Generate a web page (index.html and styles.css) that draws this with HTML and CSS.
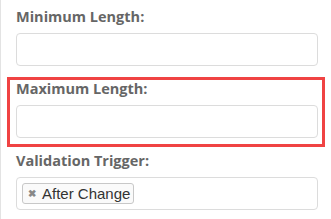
FILE: index.html
```html
<!DOCTYPE html>
<html lang="en">
<head>
    <meta charset="UTF-8">
    <title>Field Settings</title>
    <link rel="stylesheet" href="styles.css">
</head>
<body>
    <div class="panel">
        <!-- Minimum length -->
        <div class="field">
            <label class="field-label">Minimum Length:</label>
            <input type="text" class="field-input">
        </div>
        <!-- Maximum length (highlighted) -->
        <div class="field highlighted">
            <label class="field-label">Maximum Length:</label>
            <input type="text" class="field-input">
        </div>
        <!-- Validation trigger -->
        <div class="field">
            <label class="field-label">Validation Trigger:</label>
            <div class="tag-input">
                <span class="tag"><span class="tag-remove">&#x2716;</span>After Change</span>
            </div>
        </div>
    </div>
</body>
</html>
```

FILE: styles.css
```css
html, body {
    margin: 0;
    background: #fff;
}

.panel {
    border-left: 1px solid #e3e3e3;
    padding: 7px 13px 0 15px;
    min-height: 219px;
    box-sizing: border-box;
}

.field {
    position: relative;
    margin-bottom: 13px;
}

.field-label {
    display: block;
    font-family: 'Open Sans', sans-serif;
    font-weight: 700;
    font-size: 14.5px;
    line-height: 20px;
    color: #666;
    margin-bottom: 6px;
}

.field-input, .tag-input {
    display: block;
    width: 100%;
    height: 33px;
    box-sizing: border-box;
    border: 1px solid #dcdcdc;
    border-radius: 4px;
    background: #fff;
    outline: none;
}

.highlighted::after {
    content: "";
    position: absolute;
    top: -2px;
    left: -9px;
    right: -7px;
    bottom: -9px;
    border: 3px solid #f04343;
    pointer-events: none;
}

.tag-input {
    padding: 5px;
}

.tag {
    display: inline-flex;
    align-items: center;
    height: 21px;
    box-sizing: border-box;
    padding: 0 3px 0 5px;
    border: 1px solid #c8c8c8;
    border-radius: 3px;
    background: #fafafa;
    font-family: 'Liberation Sans', Arial, sans-serif;
    font-size: 15px;
    color: #333;
}

.tag-remove {
    font-size: 10px;
    font-weight: 700;
    color: #888;
    margin-right: 6px;
}
```
